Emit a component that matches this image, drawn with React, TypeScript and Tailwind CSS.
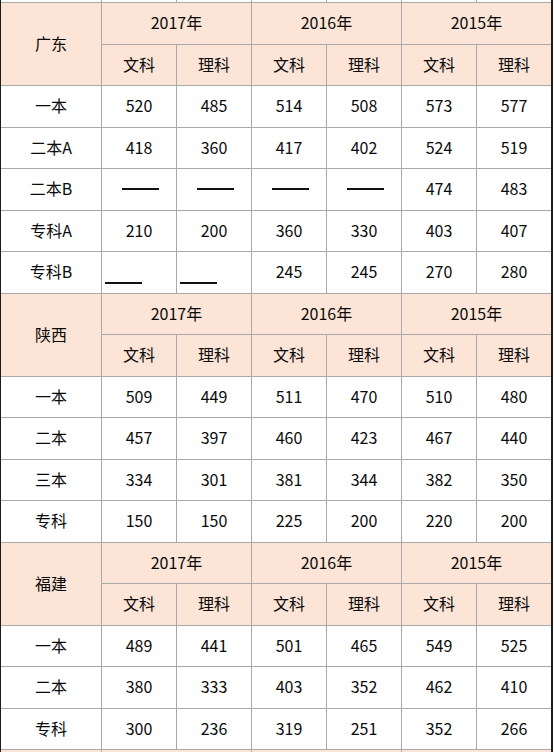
import React from "react";

type Row = (string | number)[];

interface Block {
  name: string;
  rows: Row[];
}

const years = ["2017年", "2016年", "2015年"];
const D = "——";
const U = "____";

const blocks: Block[] = [
  {
    name: "广东",
    rows: [
      ["一本", 520, 485, 514, 508, 573, 577],
      ["二本A", 418, 360, 417, 402, 524, 519],
      ["二本B", D, D, D, D, 474, 483],
      ["专科A", 210, 200, 360, 330, 403, 407],
      ["专科B", U, U, 245, 245, 270, 280],
    ],
  },
  {
    name: "陕西",
    rows: [
      ["一本", 509, 449, 511, 470, 510, 480],
      ["二本", 457, 397, 460, 423, 467, 440],
      ["三本", 334, 301, 381, 344, 382, 350],
      ["专科", 150, 150, 225, 200, 220, 200],
    ],
  },
  {
    name: "福建",
    rows: [
      ["一本", 489, 441, 501, 465, 549, 525],
      ["二本", 380, 333, 403, 352, 462, 410],
      ["专科", 300, 236, 319, 251, 352, 266],
    ],
  },
  { name: "", rows: [] },
];

const head = "bg-[#fce5d7] flex items-center justify-center pb-[2px]";
const cell = "bg-white flex items-center justify-center pb-[2px]";

function Header({ name }: { name: string }) {
  return (
    <>
      <div className={`${head} row-span-2`}>{name}</div>
      {years.map((y) => (
        <div key={y} className={`${head} col-span-2`}>
          {name ? y : ""}
        </div>
      ))}
      {years.map((y) => (
        <React.Fragment key={y}>
          <div className={head}>{name ? "文科" : ""}</div>
          <div className={head}>{name ? "理科" : ""}</div>
        </React.Fragment>
      ))}
    </>
  );
}

function DataRow({ row }: { row: Row }) {
  return (
    <>
      {row.map((v, i) => {
        if (v === U)
          return (
            <div key={i} className="bg-white flex items-end pl-[3px] pb-[9px]">
              <span className="inline-block w-[37px] h-[2px] bg-[#111]" />
            </div>
          );
        if (v === D)
          return (
            <div key={i} className="bg-white flex items-center justify-center pl-[2px]">
              <span className="inline-block w-[37px] h-[2px] bg-[#111]" />
            </div>
          );
        return (
          <div key={i} className={cell}>
            {v}
          </div>
        );
      })}
    </>
  );
}

export default function App() {
  return (
    <div className="w-[554px] h-[752px] overflow-hidden bg-white">
      <div className="w-[553px] border-l border-r-2 border-[#1c1c1c]">
        <div className="grid grid-cols-[100px_repeat(6,74px)] grid-rows-[2px] auto-rows-[40.5px] gap-px bg-[#a9a9a9] text-[16px] text-[#0a0a0a] font-['Noto_Sans_CJK_SC','Microsoft_YaHei',sans-serif]">
          {Array.from({ length: 7 }).map((_, i) => (
            <div key={i} className="bg-white" />
          ))}
          {blocks.map((b, bi) => (
            <React.Fragment key={bi}>
              <Header name={b.name} />
              {b.rows.map((r, ri) => (
                <DataRow key={ri} row={r} />
              ))}
            </React.Fragment>
          ))}
        </div>
      </div>
    </div>
  );
}
